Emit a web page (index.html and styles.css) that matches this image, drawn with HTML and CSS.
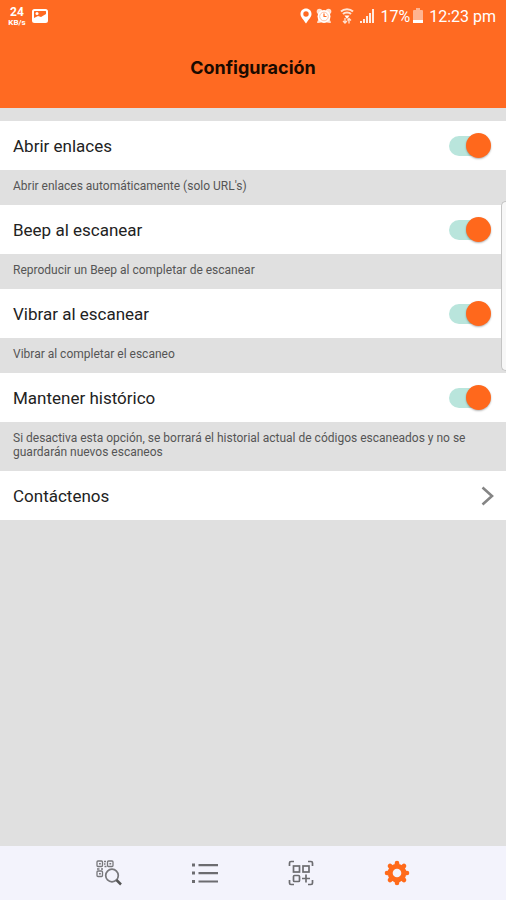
FILE: index.html
```html
<!DOCTYPE html>
<html lang="es">
<head>
  <meta charset="UTF-8">
  <title>Configuración</title>
  <meta name="viewport" content="width=device-width, initial-scale=1.0">
  <link rel="stylesheet" href="styles.css">
</head>
<body>

<header class="header">
  <div class="status-bar">
    <div class="status-left">
      <div class="speed"><span class="speed-value">24</span><span class="speed-unit">KB/s</span></div>
      <svg width="16" height="16" viewBox="0 0 16 16">
        <rect x="1" y="2" width="14" height="12" rx="1.500" fill="none" stroke="#fff" stroke-width="2"/>
        <path d="M2 13V10L6 8L9 9L14 6V13Z" fill="#fff"/>
        <circle cx="5" cy="5.500" r="1.500" fill="#fff"/>
      </svg>
    </div>
    <div class="status-right">
      <svg width="12" height="16" viewBox="0 0 12 16">
        <path fill="#fff" fill-rule="evenodd" d="M6 0.500C2.800 0.500 0.500 2.900 0.500 5.900C0.500 9 3.500 11.500 6 15.500C8.500 11.500 11.500 9 11.500 5.900C11.500 2.900 9.200 0.500 6 0.500ZM6 3.300A2.700 2.700 0 1 1 6 8.700A2.700 2.700 0 1 1 6 3.300Z"/>
      </svg>
      <svg class="alarm" width="16" height="16" viewBox="0 0 16 16">
        <circle cx="3.500" cy="3.500" r="2.800" fill="#ffe3d4"/>
        <circle cx="12.500" cy="3.500" r="2.800" fill="#ffe3d4"/>
        <path d="M3 11L1.500 14.500L5 14M13 11L14.500 14.500L11 14" fill="#ffe3d4" stroke="#ffe3d4"/>
        <circle cx="8" cy="8.500" r="6.500" fill="#fff"/>
        <circle cx="8" cy="8.500" r="4.300" fill="none" stroke="#ffb491" stroke-width="0.800"/>
        <path d="M8 5.500V8.500H10.500" fill="none" stroke="#ff6a22" stroke-width="1.200"/>
      </svg>
      <svg class="wifi" width="14" height="16" viewBox="0 0 14 16" fill="none" stroke="#ffe3d4" stroke-width="2">
        <path d="M1 3.500C4 0.500 10 0.500 13 3.500M3 6C5 4 9 4 11 6"/>
        <path d="M4.500 7.500H9.500L7 11Z" fill="#fff" stroke="none"/>
        <path d="M5 10V15M3 13L5 15L7 13M9 15.500V10.500M7.500 12.500L9 10.500L11 12.500" stroke-width="1.300"/>
      </svg>
      <svg width="16" height="16" viewBox="0 0 16 16" fill="#ffe9de">
        <path d="M1 13H3V15H1ZM4 11H6V15H4ZM7 8H9V15H7ZM10 5H12V15H10ZM13 1H15V15H13Z"/>
      </svg>
      <span class="status-battery">17%</span>
      <svg class="battery" width="10" height="16" viewBox="0 0 10 16">
        <path d="M3 0H7V2H9Q10 2 10 3V13H0V3Q0 2 1 2H3Z" fill="#ffb491"/>
        <path d="M0 12H10V15H0Z" fill="#fff"/>
      </svg>
      <span>12:23 pm</span>
    </div>
  </div>
  <h1>Configuración</h1>
</header>

<main class="settings">
  <div class="row">
    <label for="enlaces">Abrir enlaces</label>
    <input type="checkbox" class="switch" id="enlaces" checked>
  </div>
  <p class="note">Abrir enlaces automáticamente (solo URL's)</p>

  <div class="row">
    <label for="beep">Beep al escanear</label>
    <input type="checkbox" class="switch" id="beep" checked>
  </div>
  <p class="note">Reproducir un Beep al completar de escanear</p>

  <div class="row">
    <label for="vibrar">Vibrar al escanear</label>
    <input type="checkbox" class="switch" id="vibrar" checked>
  </div>
  <p class="note">Vibrar al completar el escaneo</p>

  <div class="row">
    <label for="historico">Mantener histórico</label>
    <input type="checkbox" class="switch" id="historico" checked>
  </div>
  <p class="note">Si desactiva esta opción, se borrará el historial actual de códigos escaneados y no se guardarán nuevos escaneos</p>

  <a href="#contacto" class="row">
    Contáctenos
    <svg width="14" height="20" viewBox="0 0 14 20" fill="none" stroke="#858585" stroke-width="2.600">
      <path d="M2.500 1.500L12 10L2.500 18.500"/>
    </svg>
  </a>
</main>

<div class="edge-handle"></div>

<nav class="tab-bar">
  <a href="#escanear" aria-label="Escanear">
    <svg width="26" height="26" viewBox="0 0 26 26" fill="none" stroke="#77777b">
      <g stroke-width="1.300">
        <rect x="1" y="1" width="5.500" height="5.500" rx="1"/>
        <rect x="11.500" y="1" width="5.500" height="5.500" rx="1"/>
        <rect x="1" y="11" width="5.500" height="5.500" rx="1"/>
      </g>
      <path d="M3 3.800H4.800M13.400 3.800H15.200M3 13.800H4.800M8 1.500H10M8 4H9.500M8.500 6.500H10.500M1 9H3.500M5 9H7" stroke-width="1.600"/>
      <circle cx="16" cy="15.500" r="6.300" stroke-width="1.700" fill="#f3f3fc"/>
      <path d="M20.500 20L25 24.500" stroke="#555" stroke-width="2.500"/>
    </svg>
  </a>
  <a href="#historial" aria-label="Historial">
    <svg width="26" height="26" viewBox="0 0 26 26" fill="#6c6c70">
      <path d="M0 3.500H3V6.500H0ZM0 11.500H3V14.500H0ZM0 20H3V23H0ZM6.500 4H26V6.200H6.500ZM6.500 12H26V14.200H6.500ZM6.500 20.400H26V22.600H6.500Z"/>
    </svg>
  </a>
  <a href="#crear" aria-label="Crear código">
    <svg width="26" height="26" viewBox="0 0 26 26" fill="none" stroke="#6c6c70" stroke-width="1.700">
      <path d="M1.500 6V3Q1.500 1.500 3 1.500H6M20 1.500H23Q24.500 1.500 24.500 3V6M1.500 20V23Q1.500 24.500 3 24.500H6M20 24.500H23Q24.500 24.500 24.500 23V20"/>
      <rect x="5.500" y="6" width="6" height="6"/>
      <rect x="15" y="6" width="6" height="6"/>
      <rect x="5.500" y="15.500" width="6" height="6" rx="1"/>
      <path d="M18 14.500V22.500M14 18.500H22"/>
    </svg>
  </a>
  <a href="#configuracion" aria-label="Configuración">
    <svg width="26" height="26" viewBox="0 0 26 26">
      <circle cx="13" cy="13" r="6.800" fill="none" stroke="#ff6a1a" stroke-width="5"/>
      <path d="M13 3V23M3 13H23M6 6L20 20M20 6L6 20" stroke="#ff6a1a" stroke-width="4.600" stroke-linecap="round"/>
      <circle cx="13" cy="13" r="4.300" fill="#f3f3fc"/>
    </svg>
  </a>
</nav>

</body>
</html>
```
FILE: styles.css
```css
:root {
  --orange: #ff6a22;
  --grey: #e0e0e0;
  --tab-bg: #f3f3fc;
}

* {
  box-sizing: border-box;
}

body {
  margin: 0;
  min-height: 100vh;
  display: flex;
  flex-direction: column;
  font-family: Roboto, sans-serif;
  background: var(--grey);
  color: #222;
}

.header {
  background: var(--orange);
  padding-bottom: 28px;
}

.status-bar {
  display: flex;
  justify-content: space-between;
  align-items: center;
  height: 32px;
  padding: 0 10px 0 8px;
  color: #fff;
  font-size: 16px;
}

.status-left,
.status-right {
  display: flex;
  align-items: center;
}

.status-left {
  gap: 6px;
}

.speed {
  display: flex;
  flex-direction: column;
  align-items: center;
  width: 18px;
  font-weight: bold;
}

.speed-value {
  font-size: 12px;
  line-height: 12px;
}

.speed-unit {
  font-size: 8px;
  line-height: 9px;
}

.alarm {
  margin-left: 4px;
}

.wifi {
  margin: 0 5px 0 8px;
}

.status-battery {
  margin-left: 5px;
}

.battery {
  margin: 0 6px 0 3px;
}

h1 {
  margin: 24px 0 0;
  font-family: Inter, sans-serif;
  font-size: 18px;
  line-height: 24px;
  font-weight: bold;
  text-align: center;
  color: #1a0a00;
}

.settings {
  flex: 1;
  padding-top: 13px;
}

.row {
  display: flex;
  justify-content: space-between;
  align-items: center;
  height: 49px;
  padding: 0 12px 0 13px;
  background: #fff;
  color: #222;
  font-size: 17px;
  text-decoration: none;
}

.switch {
  appearance: none;
  display: flex;
  align-items: center;
  justify-content: flex-end;
  width: 42px;
  height: 20px;
  margin: 0 3px 0 0;
  border-radius: 10px;
  background: linear-gradient(#b9e5dc, #b9e5dc) left center / 30px 20px no-repeat;
  cursor: pointer;
}

.switch::before {
  content: "";
  width: 25px;
  height: 25px;
  flex-shrink: 0;
  border-radius: 50%;
  background: #ff681c;
  box-shadow: 0 1px 2px rgba(0, 0, 0, 0.3);
}

.switch:not(:checked) {
  justify-content: flex-start;
}

.note {
  margin: 0;
  padding: 9px 13px 12px;
  font-size: 12px;
  line-height: 14px;
  color: #555;
}

.edge-handle {
  position: absolute;
  top: 201px;
  right: 0;
  width: 5px;
  height: 170px;
  background: #f7f7f7;
  border: 1px solid #c4c4c4;
  border-right: none;
  border-radius: 5px 0 0 5px;
}

.tab-bar {
  display: flex;
  height: 54px;
  padding: 0 12%;
  background: var(--tab-bg);
}

.tab-bar a {
  flex: 1;
  display: flex;
  align-items: center;
  justify-content: center;
}
```
